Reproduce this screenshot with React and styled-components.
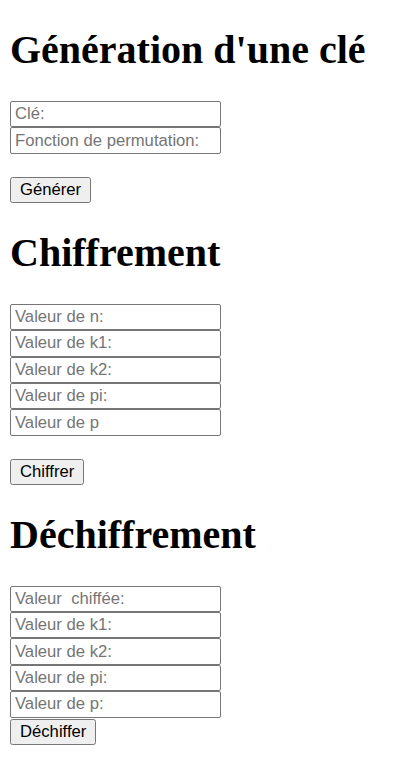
import React from "react";
import styled, { createGlobalStyle } from "styled-components";

const Global = createGlobalStyle`
  html, body {
    margin: 0;
    padding: 0;
    background: #ffffff;
  }
  body {
    padding: 0 10px;
    font-family: "Liberation Serif", "Times New Roman", serif;
    font-size: 20px;
    color: #000000;
  }
`;

const Page = styled.main`
  display: block;
`;

const Section = styled.section`
  display: block;
`;

const Heading = styled.h1`
  margin: 26.8px 0;
  font-family: "Liberation Serif", "Times New Roman", serif;
  font-weight: 700;
  font-size: 40px;
  line-height: 46px;
  color: #000000;
`;

const Fields = styled.div`
  display: flex;
  flex-direction: column;
  align-items: flex-start;
  padding-top: 1.4px;
`;

const Input = styled.input`
  box-sizing: border-box;
  width: 211px;
  height: 26.4px;
  margin: 0;
  padding: 0 4px;
  border: 1px solid #767676;
  border-radius: 2px;
  background: #ffffff;
  font-family: "Liberation Sans", Arial, sans-serif;
  font-size: 16.67px;
  color: #000000;
  outline: none;
  &::placeholder {
    color: #757575;
    opacity: 1;
  }
`;

const Button = styled.button`
  display: block;
  box-sizing: border-box;
  height: 26px;
  margin: ${(p) => (p.$tight ? "1px" : "23px")} 0 0 0;
  padding: 0 9px;
  border: 1px solid #767676;
  border-radius: 2.5px;
  background: #efefef;
  font-family: "Liberation Sans", Arial, sans-serif;
  font-size: 16.67px;
  color: #000000;
  cursor: pointer;
`;

const sections = [
  {
    title: "Génération d'une clé",
    fields: ["Clé:", "Fonction de permutation:"],
    action: "Générer",
  },
  {
    title: "Chiffrement",
    fields: [
      "Valeur de n:",
      "Valeur de k1:",
      "Valeur de k2:",
      "Valeur de pi:",
      "Valeur de p",
    ],
    action: "Chiffrer",
  },
  {
    title: "Déchiffrement",
    fields: [
      "Valeur  chiffée:",
      "Valeur de k1:",
      "Valeur de k2:",
      "Valeur de pi:",
      "Valeur de p:",
    ],
    action: "Déchiffer",
    tight: true,
  },
];

export default function App() {
  return (
    <>
      <Global />
      <Page>
        {sections.map((s) => (
          <Section key={s.title}>
            <Heading>{s.title}</Heading>
            <Fields>
              {s.fields.map((f, i) => (
                <Input key={i} type="text" placeholder={f} />
              ))}
            </Fields>
            <Button type="button" $tight={s.tight}>
              {s.action}
            </Button>
          </Section>
        ))}
      </Page>
    </>
  );
}
